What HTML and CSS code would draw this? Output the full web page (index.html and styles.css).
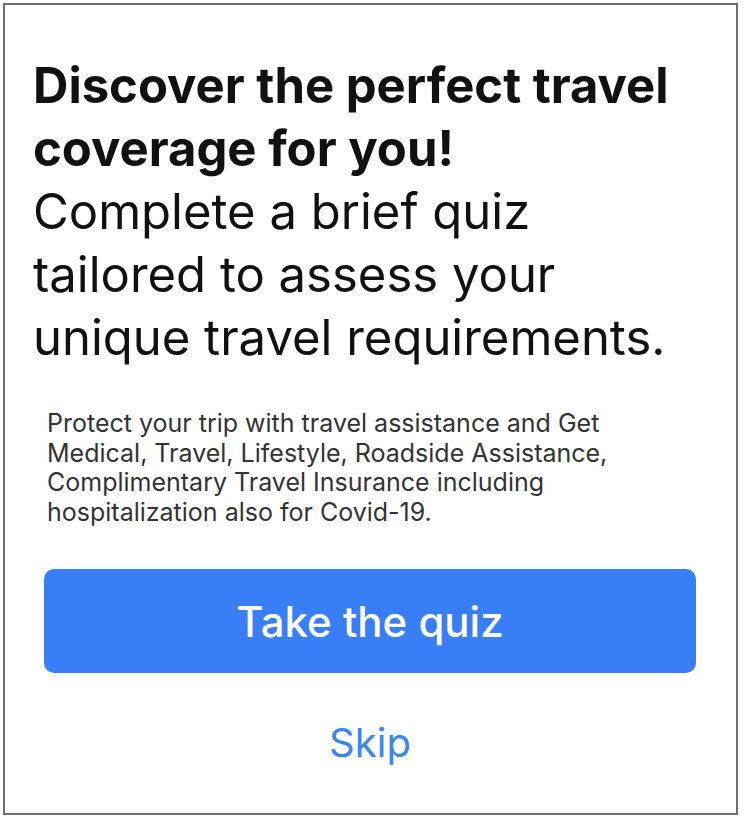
FILE: index.html
```html
<!DOCTYPE html>
<html lang="en">
<head>
  <meta charset="UTF-8" />
  <meta name="viewport" content="width=device-width, initial-scale=1.0"/>
  <title>Travel Quiz</title>
  <link rel="stylesheet" href="styles.css">
</head>
<body>
  <div class="frame">
    <!-- Intro text -->
    <div class="intro">
      <h1 class="title">Discover the perfect travel coverage for you!</h1>
      <p class="lead">Complete a brief quiz tailored to assess your unique travel requirements.</p>
    </div>

    <p class="note">Protect your trip with travel assistance and Get Medical, Travel, Lifestyle, Roadside Assistance, Complimentary Travel Insurance including hospitalization also for Covid-19.</p>

    <!-- Actions -->
    <div class="actions">
      <button class="button-primary">Take the quiz</button>
      <button class="button-link">Skip</button>
    </div>
  </div>
</body>
</html>
```

FILE: styles.css
```css
html, body {
  margin: 0;
  padding: 0;
  background-color: #ffffff;
}

body {
  font-family: Inter, 'Noto Sans', sans-serif;
  color: #111;
  padding: 3px 6px 5px 3px;
}

.frame {
  border: 2px solid #6f6f6f;
  height: 812px;
  box-sizing: border-box;
  padding: 49px 40px 0 28px;
  display: flex;
  flex-direction: column;
}

.intro {
  max-width: 660px;
}

.title {
  margin: 0;
  font-size: 49px;
  font-weight: 700;
  line-height: 63px;
}

.lead {
  margin: 0;
  font-size: 49px;
  font-weight: 400;
  line-height: 63px;
}

.note {
  margin: 40px 0 0 14px;
  font-size: 25px;
  line-height: 29.5px;
  color: #333;
  max-width: 590px;
}

.actions {
  margin: 42px 0 0 11px;
  display: flex;
  flex-direction: column;
  align-items: stretch;
}

.button-primary {
  height: 104px;
  background-color: #387ef7;
  color: #fff;
  border: none;
  border-radius: 10px;
  font-family: inherit;
  font-size: 42px;
  font-weight: 500;
  cursor: pointer;
}

.button-link {
  margin-top: 44px;
  background: none;
  border: none;
  color: #3a86f0;
  font-family: inherit;
  font-size: 40px;
  cursor: pointer;
  align-self: center;
}
```
